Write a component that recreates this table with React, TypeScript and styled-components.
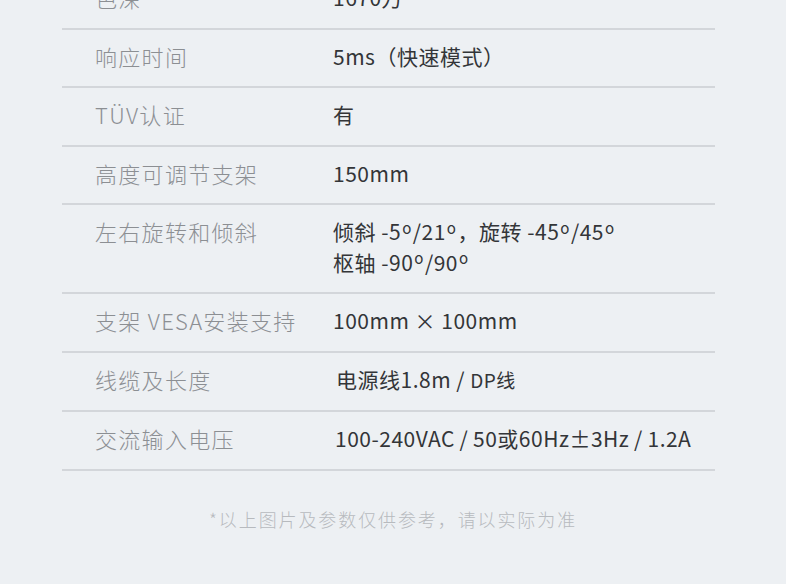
import React from 'react';
import styled, { createGlobalStyle } from 'styled-components';

const GlobalStyle = createGlobalStyle`
  html, body {
    margin: 0;
    padding: 0;
    background: #edf0f3;
    overflow: hidden;
  }
  body {
    font-family: 'Noto Sans CJK SC', 'Noto Sans', sans-serif;
  }
`;

const Page = styled.div`
  width: 786px;
  height: 584px;
  background: #edf0f3;
  overflow: hidden;
`;

const Table = styled.div`
  margin: -29px 71px 0 62px;
`;

const Row = styled.div`
  display: grid;
  grid-template-columns: 271px 1fr;
  padding: 11px 0 15px;
  border-bottom: 2px solid #d3d6da;
`;

const Label = styled.div`
  padding-left: 33px;
  font-size: 22px;
  line-height: 30.5px;
  letter-spacing: 1.3px;
  color: #8c8f93;
  font-weight: 300;
  white-space: nowrap;
`;

const Value = styled.div<{ $shift?: number }>`
  font-size: 21px;
  line-height: 30.5px;
  letter-spacing: 0.5px;
  color: #333538;
  white-space: nowrap;
  padding-left: ${(p) => p.$shift ?? 0}px;
`;

const Small = styled.span`
  font-size: 19px;
`;

// raised small circle used for degrees in the reference
const Deg = styled.span`
  font-size: 0.72em;
  vertical-align: 0.42em;
  line-height: 0;
  margin: 0 1px;
`;

const Note = styled.div`
  margin-top: 35px;
  text-align: center;
  font-size: 18px;
  letter-spacing: 1.9px;
  color: #b7babe;
  font-weight: 300;
`;

const d = <Deg>o</Deg>;

const specs: { label: string; value: React.ReactNode; shift?: number }[] = [
  { label: '色深', value: '1670万' },
  { label: '响应时间', value: '5ms（快速模式）' },
  { label: 'TÜV认证', value: '有' },
  { label: '高度可调节支架', value: '150mm' },
  {
    label: '左右旋转和倾斜',
    value: (
      <>
        倾斜 -5{d}/21{d}，旋转 -45{d}/45{d}
        <br />
        枢轴 -90{d}/90{d}
      </>
    ),
  },
  { label: '支架 VESA安装支持', value: '100mm × 100mm' },
  {
    label: '线缆及长度',
    value: (
      <>
        电源线1.8m / <Small>DP线</Small>
      </>
    ),
    shift: 3,
  },
  { label: '交流输入电压', value: '100-240VAC\u2009/\u200950或60Hz±3Hz\u2009/\u20091.2A', shift: 2 },
];

export default function App() {
  return (
    <Page>
      <GlobalStyle />
      <Table>
        {specs.map((s) => (
          <Row key={s.label}>
            <Label>{s.label}</Label>
            <Value $shift={s.shift}>{s.value}</Value>
          </Row>
        ))}
      </Table>
      <Note>*以上图片及参数仅供参考，请以实际为准</Note>
    </Page>
  );
}
